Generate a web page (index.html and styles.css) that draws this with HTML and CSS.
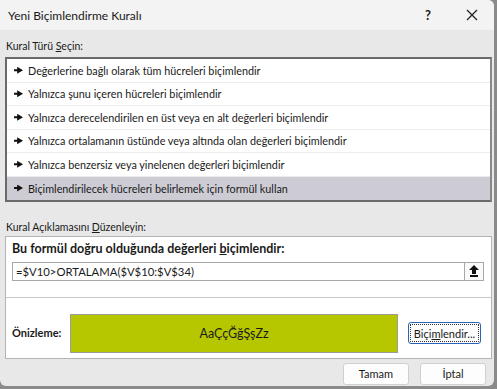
FILE: index.html
```html
<!DOCTYPE html>
<html>
<head>
  <title>Yeni Biçimlendirme Kuralı</title>
  <link rel="stylesheet" href="styles.css">
</head>
<body>
  <div class="dialog">
    <div class="titlebar">
      <span class="title">Yeni Biçimlendirme Kuralı</span>
      <span class="help">?</span>
      <span class="close">
        <svg width="12" height="12" viewBox="0 0 12 12"><path d="M1 1 L11 11 M11 1 L1 11" stroke="#222" stroke-width="1.3" fill="none"/></svg>
      </span>
    </div>

    <div class="content">
      <div class="label">Kural Türü <u>S</u>eçin:</div>
      <ul class="rule-list">
        <li class="rule">Değerlerine bağlı olarak tüm hücreleri biçimlendir</li>
        <li class="rule">Yalnızca şunu içeren hücreleri biçimlendir</li>
        <li class="rule">Yalnızca derecelendirilen en üst veya en alt değerleri biçimlendir</li>
        <li class="rule">Yalnızca ortalamanın üstünde veya altında olan değerleri biçimlendir</li>
        <li class="rule">Yalnızca benzersiz veya yinelenen değerleri biçimlendir</li>
        <li class="rule selected">Biçimlendirilecek hücreleri belirlemek için formül kullan</li>
      </ul>

      <div class="label label-second">Kural Açıklamasını <u>D</u>üzenleyin:</div>
      <div class="panel">
        <div class="formula-section">
          <div class="bold-label">Bu formül doğru olduğunda değerleri <u>b</u>içimlendir:</div>
          <div class="formula-input">
            <span class="formula-text">=$V10&gt;ORTALAMA($V$10:$V$34)</span>
            <span class="ref-button">
              <svg width="10" height="12" viewBox="0 0 10 12"><path d="M5 0 L10 5 L7 5 L7 9 L3 9 L3 5 L0 5 Z" fill="#111"/><rect x="1" y="10" width="8" height="2" fill="#111"/></svg>
            </span>
          </div>
        </div>
        <div class="preview-section">
          <span class="bold-label preview-label">Önizleme:</span>
          <div class="preview">AaÇçĞğŞşZz</div>
          <span class="button format-button">Biçi<u>m</u>lendir...</span>
        </div>
      </div>

      <div class="actions">
        <span class="button">Tamam</span>
        <span class="button">İptal</span>
      </div>
    </div>
  </div>
</body>
</html>
```

FILE: styles.css
```css
html, body {
  margin: 0;
  padding: 0;
}

body {
  background-color: #8a8a8a;
  font-family: Lato, "Noto Sans", sans-serif;
  color: #1a1a1a;
  width: 497px;
  height: 389px;
  overflow: hidden;
}

.dialog {
  width: 494px;
  height: 386px;
  background-color: #e8e8e8;
  border-radius: 0 6px 6px 6px;
  overflow: hidden;
}

.titlebar {
  height: 30px;
  background-color: #f3f3f3;
  display: flex;
  align-items: center;
  padding-left: 8px;
}

.title {
  font-size: 12px;
  flex: 1;
}

.help {
  font-size: 13px;
  font-weight: bold;
  width: 44px;
  text-align: center;
}

.close {
  width: 44px;
  display: flex;
  justify-content: center;
}

.content {
  padding: 0 2px 0 5px;
}

.label {
  font-size: 10.5px;
  line-height: 14px;
  padding: 9px 0 4px 1px;
}

.label-second {
  padding: 18px 0 2px 1px;
}

.rule-list {
  list-style: none;
  margin: 0;
  padding: 0;
  background-color: #ffffff;
  border: 2px solid #6a6a6a;
  border-right-color: #888888;
}

.rule {
  height: 22.5px;
  font-size: 10.8px;
  padding-left: 7px;
  border-bottom: 1px solid #ececec;
  display: flex;
  align-items: center;
}

.rule::before {
  content: "";
  width: 9px;
  height: 7px;
  margin-right: 5px;
  clip-path: polygon(0 36%, 35% 36%, 35% 0, 100% 50%, 35% 100%, 35% 64%, 0 64%);
  background-color: #111111;
}

.rule.selected {
  background-color: #cdccd4;
  border-bottom: none;
  height: 23px;
}

.panel {
  background-color: #ffffff;
  border: 1px solid #b4b4b4;
}

.formula-section {
  height: 61px;
  box-sizing: border-box;
  padding: 4px 7px 0 6px;
  border-bottom: 1px solid #c8c8c8;
}

.bold-label {
  font-size: 12.5px;
  line-height: 16px;
  font-weight: bold;
}

.formula-input {
  margin-top: 5px;
  height: 17px;
  border: 1px solid #a8a8a8;
  display: flex;
  align-items: center;
}

.formula-text {
  font-size: 11.3px;
  flex: 1;
  padding-left: 3px;
}

.ref-button {
  width: 18px;
  height: 17px;
  border-left: 1px solid #a8a8a8;
  display: flex;
  align-items: center;
  justify-content: center;
  background-color: #fafafa;
}

.preview-section {
  height: 60px;
  box-sizing: border-box;
  display: flex;
  align-items: center;
  padding: 11px 8px 0 6px;
}

.preview-label {
  width: 58px;
  font-size: 11px;
}

.preview {
  width: 326px;
  height: 37px;
  background-color: #b6c700;
  border: 1px solid #9a9a9a;
  display: flex;
  align-items: center;
  justify-content: center;
  font-size: 12.5px;
  margin-right: 10px;
}

.button {
  display: inline-flex;
  align-items: center;
  justify-content: center;
  background-color: #fdfdfd;
  border: 1px solid #d0d0d0;
  border-radius: 3px;
  font-size: 11px;
  height: 20px;
}

.format-button {
  width: 71px;
  border: 1px solid #2a62b8;
  outline: 1px dotted #333;
  outline-offset: -3px;
}

.actions {
  display: flex;
  justify-content: flex-end;
  gap: 11px;
  padding: 4px 6px 0 0;
}

.actions .button {
  width: 64px;
}
```
